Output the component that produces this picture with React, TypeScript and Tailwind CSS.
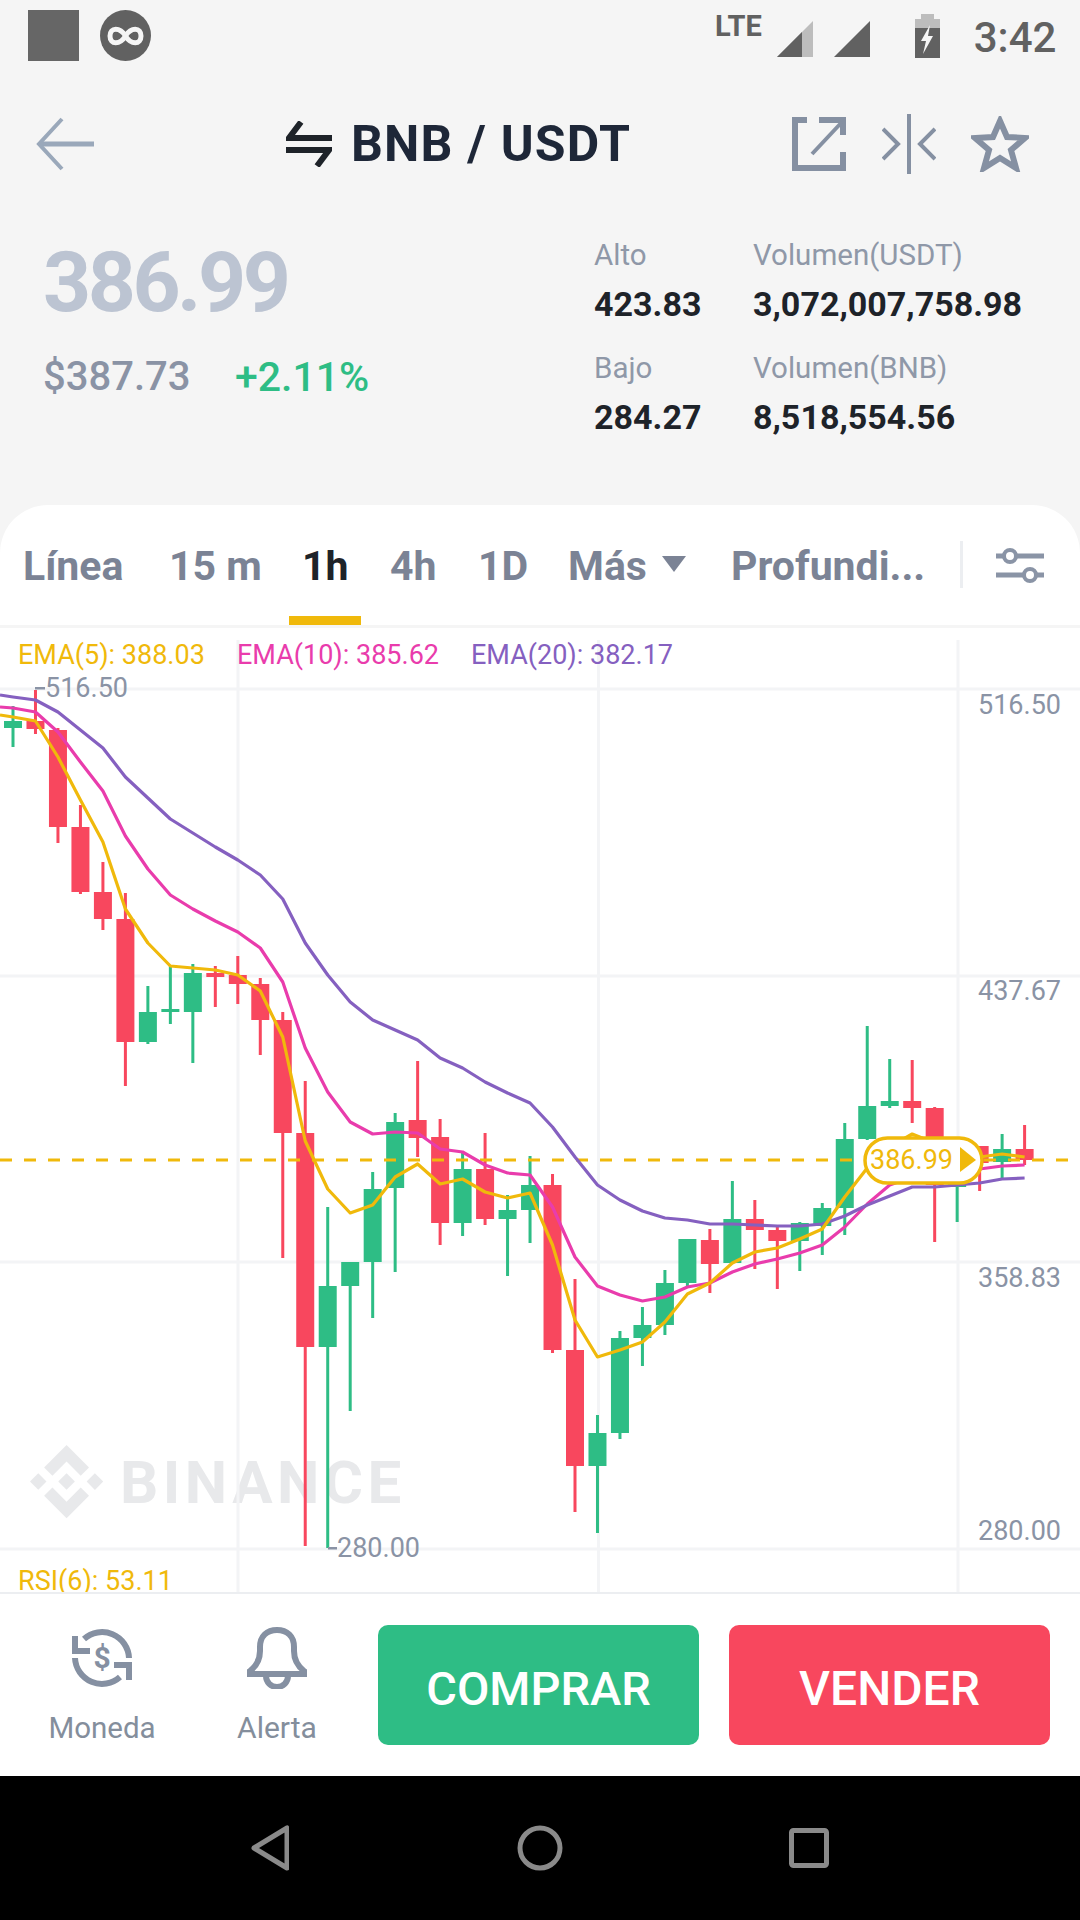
import React from "react";

const candleX = (i: number) => 13 + 22.48 * i;

// [wick top, body top, body bottom, wick bottom, rising]
const candles: [number, number, number, number, boolean][] = [
    [706, 721, 728, 747, true],
    [690, 721, 729, 734, false],
    [728, 730, 827, 843, false],
    [805, 827, 892, 894, false],
    [862, 892, 919, 930, false],
    [893, 919, 1042, 1086, false],
    [986, 1012, 1042, 1044, true],
    [966, 1009, 1012, 1024, true],
    [964, 973, 1012, 1063, true],
    [966, 973, 977, 1007, false],
    [956, 975, 984, 1004, false],
    [978, 984, 1020, 1055, false],
    [1012, 1020, 1133, 1258, false],
    [1081, 1133, 1347, 1546, false],
    [1207, 1286, 1347, 1548, true],
    [1262, 1262, 1286, 1411, true],
    [1172, 1189, 1262, 1318, true],
    [1113, 1122, 1188, 1272, true],
    [1061, 1120, 1138, 1157, false],
    [1119, 1137, 1223, 1245, false],
    [1152, 1169, 1223, 1236, true],
    [1133, 1169, 1219, 1225, false],
    [1195, 1210, 1219, 1276, true],
    [1156, 1185, 1210, 1243, true],
    [1174, 1185, 1350, 1353, false],
    [1279, 1350, 1466, 1512, false],
    [1415, 1433, 1466, 1533, true],
    [1331, 1338, 1433, 1439, true],
    [1307, 1325, 1338, 1366, true],
    [1270, 1283, 1325, 1335, true],
    [1283, 1239, 1283, 1287, true],
    [1229, 1240, 1264, 1293, false],
    [1181, 1219, 1263, 1264, true],
    [1200, 1219, 1230, 1269, false],
    [1227, 1230, 1241, 1289, false],
    [1222, 1223, 1241, 1271, true],
    [1203, 1208, 1226, 1255, true],
    [1123, 1139, 1208, 1235, true],
    [1026, 1106, 1139, 1140, true],
    [1059, 1101, 1106, 1108, true],
    [1060, 1101, 1108, 1123, false],
    [1107, 1108, 1185, 1242, false],
    [1150, 1160, 1187, 1222, true],
    [1146, 1146, 1163, 1191, false],
    [1134, 1149, 1162, 1178, true],
    [1125, 1149, 1160, 1165, false],
];

const ema5 = [717, 721, 757, 800, 842, 909, 943, 966, 968, 970, 975, 991, 1037, 1141, 1189, 1213, 1205, 1177, 1164, 1184, 1179, 1192, 1198, 1193, 1245, 1320, 1357, 1350, 1342, 1322, 1294, 1283, 1263, 1252, 1248, 1239, 1229, 1197, 1168, 1147, 1134, 1143, 1155, 1157, 1154, 1157];
const ema10 = [708, 712, 732, 762, 791, 836, 869, 895, 909, 921, 932, 948, 982, 1048, 1092, 1122, 1134, 1132, 1133, 1149, 1152, 1165, 1173, 1175, 1207, 1257, 1286, 1295, 1301, 1297, 1287, 1283, 1272, 1264, 1259, 1253, 1245, 1227, 1204, 1185, 1177, 1175, 1173, 1169, 1166, 1165];
const ema20 = [697, 700, 712, 730, 748, 777, 798, 819, 833, 847, 860, 875, 899, 943, 975, 1002, 1020, 1030, 1040, 1058, 1068, 1082, 1093, 1103, 1127, 1157, 1185, 1200, 1211, 1218, 1220, 1224, 1224, 1225, 1226, 1226, 1224, 1216, 1205, 1196, 1187, 1187, 1185, 1183, 1179, 1178];

const points = (start: number, values: number[]) =>
    `0,${start} ` + values.map((y, i) => `${candleX(i)},${y}`).join(" ");

const axisLabels: [string, number][] = [
    ["516.50", 714],
    ["437.67", 1000],
    ["358.83", 1287],
    ["280.00", 1540],
];

function Chart() {
    return (
        <svg width="1080" height="964" viewBox="0 628 1080 964" className="block">
            <g transform="translate(30 1445) scale(3.05)" fill="#e8e9eb">
                <path d="M16.624 13.9202l2.7175 2.7154-7.353 7.353-7.353-7.352 2.7175-2.7164 4.6355 4.6595 4.6356-4.6595zm4.6366-4.6366L24 12l-2.7154 2.7164L18.5682 12l2.6924-2.7164zm-9.272.001l2.7163 2.6914-2.7164 2.7174v-.001L9.2721 12l2.7164-2.7154zm-9.2722-.001L5.4088 12l-2.6914 2.6924L0 12l2.7164-2.7164zM11.9885.0115l7.353 7.329-2.7174 2.7154-4.6356-4.6356-4.6355 4.6595-2.7174-2.7154 7.353-7.353z" />
            </g>
            <text x="120" y="1503" fontSize="60" fontWeight="700" letterSpacing="4.5" fill="#e8e9eb">
                BINANCE
            </text>

            {[238, 598.5, 958].map((x) => (
                <line key={x} x1={x} x2={x} y1="640" y2="1592" stroke="#f3f4f6" strokeWidth="3" />
            ))}
            {[689, 976, 1262, 1549].map((y) => (
                <line key={y} x1="0" x2="1080" y1={y} y2={y} stroke="#f3f4f6" strokeWidth="3" />
            ))}

            {candles.map(([wickTop, top, bottom, wickBottom, rising], i) => {
                const color = rising ? "#2ebd85" : "#f8475e";
                const x = candleX(i);
                return (
                    <g key={i} fill={color}>
                        <rect x={x - 1.5} y={wickTop} width="3" height={wickBottom - wickTop} />
                        <rect x={x - 9} y={top} width="18" height={bottom - top} />
                    </g>
                );
            })}

            <line x1="0" x2="1068" y1="1160" y2="1160" stroke="#f0b90b" strokeWidth="3" strokeDasharray="12 12" />

            <g fill="none" strokeWidth="3.2" strokeLinejoin="round">
                <polyline points={points(707, ema10)} stroke="#e93cac" />
                <polyline points={points(695, ema20)} stroke="#8560c0" />
                <polyline points={points(715, ema5)} stroke="#f0b90b" />
            </g>

            <rect x="865" y="1138" width="117" height="45" rx="22.5" fill="#ffffff" stroke="#f0b90b" strokeWidth="3.5" />
            <text x="870" y="1169" fontSize="27" fill="#f0b90b">
                386.99
            </text>
            <polygon points="960,1147 976,1160 960,1172" fill="#f0b90b" />

            <g fontSize="27" fill="#8a93a5">
                {axisLabels.map(([label, y]) => (
                    <text key={label} x="1061" y={y} textAnchor="end">
                        {label}
                    </text>
                ))}
                <text x="45" y="697">
                    516.50
                </text>
                <text x="337" y="1557">
                    280.00
                </text>
            </g>
            <rect x="35" y="687" width="10" height="2.5" fill="#8a93a5" />
            <rect x="328" y="1547" width="9" height="2.5" fill="#8a93a5" />

            <g fontSize="27">
                <text x="18" y="664" fill="#f0b90b">
                    EMA(5): 388.03
                </text>
                <text x="237" y="664" fill="#e93cac">
                    EMA(10): 385.62
                </text>
                <text x="471" y="664" fill="#8560c0">
                    EMA(20): 382.17
                </text>
                <text x="18" y="1590" fill="#f0b90b">
                    RSI(6): 53.11
                </text>
            </g>
        </svg>
    );
}

function StatusBar() {
    return (
        <div className="flex h-[100px] items-start">
            <div className="ml-[28px] mt-[10px] h-[51px] w-[51px] bg-[#666666]" />
            <svg width="51" height="51" viewBox="0 0 51 51" className="ml-[21px] mt-[10px]">
                <circle cx="25.5" cy="25.5" r="25.5" fill="#616161" />
                <path
                    d="M25.5 26 C20 17 10 17 10 26 C10 35 20 35 25.5 26 C31 17 41 17 41 26 C41 35 31 35 25.5 26"
                    fill="none"
                    stroke="#f5f5f5"
                    strokeWidth="5"
                />
            </svg>
            <span className="ml-[564px] mt-[11px] text-[29px] font-bold leading-[30px] text-[#616161]">LTE</span>
            <svg width="93" height="36" viewBox="0 0 93 36" className="ml-[15px] mt-[21px]">
                <polygon points="36,0 36,36 0,36" fill="#bdbdbd" />
                <polygon points="25,11 25,36 0,36" fill="#616161" />
                <polygon points="93,0 93,36 57,36" fill="#616161" />
            </svg>
            <svg width="25" height="44" viewBox="0 0 25 44" className="ml-[45px] mt-[14px]">
                <rect x="6" y="0" width="13" height="6" fill="#bdbdbd" />
                <rect x="0" y="5" width="25" height="10" fill="#bdbdbd" />
                <rect x="0" y="14" width="25" height="30" fill="#616161" />
                <polygon points="15,11 6,27 11,27 8,40 18,22 13,22" fill="#f5f5f5" />
            </svg>
            <span className="ml-[34px] mt-[14px] text-[42px] font-medium leading-[48px] text-[#616161]">3:42</span>
        </div>
    );
}

function Header() {
    return (
        <div className="flex h-[88px] items-center">
            <svg width="58" height="54" viewBox="0 0 58 54" fill="none" stroke="#9aa8ba" className="ml-[36px]">
                <path d="M3 27 H58" strokeWidth="5" />
                <path d="M26 2 L3 27 L26 52" strokeWidth="4" />
            </svg>
            <svg width="46" height="46" viewBox="0 0 46 46" fill="none" stroke="#1e2329" strokeWidth="6" className="ml-[192px]">
                <path d="M15 1 L3 17 H46" />
                <path d="M0 29 H43 L31 45" />
            </svg>
            <span className="ml-[19px] w-[441px] text-[50px] font-bold leading-[54px] tracking-[1.2px] text-[#1e2738]">
                BNB / USDT
            </span>
            <svg width="54" height="54" viewBox="0 0 54 54" fill="none" stroke="#8590a2" strokeWidth="6">
                <path d="M15 3 H3 V51 H51 V35" />
                <path d="M27 3 H51 V18" />
                <path d="M50 5 L20 37" strokeWidth="4" />
            </svg>
            <svg width="54" height="60" viewBox="0 0 54 60" fill="none" stroke="#8590a2" strokeWidth="4" className="ml-[36px]">
                <path d="M27 0 V60" />
                <path d="M1 15 L16 30 L1 45" />
                <path d="M53 15 L38 30 L53 45" />
            </svg>
            <svg width="58" height="56" viewBox="0 0 58 56" fill="none" stroke="#8590a2" strokeWidth="6" className="ml-[35px]">
                <polygon points="29,5 36,21 54,22 40,34 45,52 29,42 13,52 18,34 4,22 22,21" />
            </svg>
        </div>
    );
}

function Stats() {
    return (
        <div className="flex h-[317px]">
            <div className="ml-[43px] w-[551px] pt-[53px]">
                <div className="text-[84px] font-bold leading-[84px] tracking-[-3.5px] text-[#bcc4d2]">386.99</div>
                <div className="mt-[31px] flex font-medium leading-[42px]">
                    <span className="w-[192px] text-[40px] text-[#8a93a5]">$387.73</span>
                    <span className="text-[41px] text-[#2ebd85]">+2.11%</span>
                </div>
            </div>
            <div className="w-[159px] pt-[53px]">
                <StatCell label="Alto" value="423.83" />
                <div className="mt-[33px]">
                    <StatCell label="Bajo" value="284.27" />
                </div>
            </div>
            <div className="pt-[53px]">
                <StatCell label="Volumen(USDT)" value="3,072,007,758.98" />
                <div className="mt-[33px]">
                    <StatCell label="Volumen(BNB)" value="8,518,554.56" />
                </div>
            </div>
        </div>
    );
}

function StatCell({ label, value }: { label: string; value: string }) {
    return (
        <div>
            <div className="text-[29.5px] leading-[29px] text-[#8f98a8]">{label}</div>
            <div className="mt-[17px] text-[34px] font-bold leading-[34px] text-[#1e2329]">{value}</div>
        </div>
    );
}

const tabs = [
    { label: "Línea", width: "w-[146px]" },
    { label: "15 m", width: "w-[133px]" },
    { label: "1h", width: "w-[88px]", active: true },
    { label: "4h", width: "w-[88px]" },
    { label: "1D", width: "w-[90px]" },
];

function Tabs() {
    return (
        <div className="flex h-[120px] items-start pl-[23px] pt-[41px] text-[41px] font-bold leading-[41px] text-[#7b8395]">
            {tabs.map((tab) => (
                <div key={tab.label} className={`relative ${tab.width}`}>
                    <span className={tab.active ? "text-[#1e2329]" : ""}>{tab.label}</span>
                    {tab.active && <div className="absolute left-[-13px] top-[70px] h-[9px] w-[72px] bg-[#f0b90b]" />}
                </div>
            ))}
            <div className="flex w-[163px] items-center">
                <span>Más</span>
                <svg width="24" height="16" viewBox="0 0 24 16" className="ml-[15px] mt-[-6px]">
                    <polygon points="0,0 24,0 12,16" fill="#7b8395" />
                </svg>
            </div>
            <span className="w-[229px] whitespace-nowrap">Profundi...</span>
            <div className="mt-[-5px] h-[47px] w-[3px] bg-[#eceef1]" />
            <svg width="48" height="36" viewBox="0 0 48 36" fill="none" stroke="#8a94a6" strokeWidth="5" className="ml-[33px] mt-[2px]">
                <path d="M0 8 H48" />
                <path d="M0 27 H48" />
                <circle cx="14" cy="8" r="6" fill="#ffffff" strokeWidth="4" />
                <circle cx="34" cy="27" r="6" fill="#ffffff" strokeWidth="4" />
            </svg>
        </div>
    );
}

function BottomBar() {
    return (
        <div className="flex h-[184px] items-start border-t-2 border-[#eceef1] bg-white">
            <div className="flex w-[204px] flex-col items-center pt-[33px]">
                <svg width="60" height="62" viewBox="0 0 60 62" fill="none" stroke="#8590a2" strokeWidth="6">
                    <path d="M12 12 A27 27 0 0 1 57 31" />
                    <path d="M3 31 A27 27 0 0 0 48 50" />
                    <path d="M3 9 V24 H18" />
                    <path d="M42 38 H57 V53" />
                    <text x="30" y="41" textAnchor="middle" fontSize="30" fontWeight="700" fill="#8590a2" stroke="none">
                        $
                    </text>
                </svg>
                <span className="mt-[22px] text-[29.5px] leading-[34px] text-[#848e9c]">Moneda</span>
            </div>
            <div className="flex w-[146px] flex-col items-center pt-[33px]">
                <svg width="60" height="62" viewBox="0 0 60 62" fill="none" stroke="#8590a2" strokeWidth="6">
                    <path d="M3 44 C12 37 13 30 13 24 V20 C13 9 20 3 30 3 C40 3 47 9 47 20 V24 C47 30 48 37 57 44 V47 H3 Z" />
                    <path d="M19 49 A11 11 0 0 0 41 49" />
                </svg>
                <span className="mt-[22px] text-[30px] leading-[34px] text-[#848e9c]">Alerta</span>
            </div>
            <button className="ml-[28px] mt-[31px] flex h-[120px] w-[321px] items-center justify-center rounded-[10px] bg-[#2ebd85] pt-[8px] text-[47px] font-medium text-white">
                COMPRAR
            </button>
            <button className="ml-[30px] mt-[31px] flex h-[120px] w-[321px] items-center justify-center rounded-[10px] bg-[#f8475e] pt-[8px] text-[48px] font-medium text-white">
                VENDER
            </button>
        </div>
    );
}

function NavBar() {
    return (
        <div className="flex h-[144px] items-center bg-black">
            <svg width="38" height="46" viewBox="0 0 38 46" fill="none" stroke="#8a8a8a" strokeWidth="5" strokeLinejoin="round" className="ml-[251px]">
                <polygon points="36,3 36,43 3,23" />
            </svg>
            <svg width="46" height="46" viewBox="0 0 46 46" fill="none" stroke="#8a8a8a" strokeWidth="5" className="ml-[228px]">
                <circle cx="23" cy="23" r="20" />
            </svg>
            <svg width="40" height="40" viewBox="0 0 40 40" fill="none" stroke="#8a8a8a" strokeWidth="5" className="ml-[226px]">
                <rect x="2.5" y="2.5" width="35" height="35" rx="2" />
            </svg>
        </div>
    );
}

export default function App() {
    return (
        <div className="h-[1920px] w-[1080px] overflow-hidden bg-[#f5f5f5] [font-family:Roboto,sans-serif]">
            <StatusBar />
            <Header />
            <Stats />
            <div className="rounded-t-[48px] bg-white">
                <Tabs />
                <div className="border-t-[3px] border-[#f5f5f5]">
                    <Chart />
                </div>
            </div>
            <BottomBar />
            <NavBar />
        </div>
    );
}
